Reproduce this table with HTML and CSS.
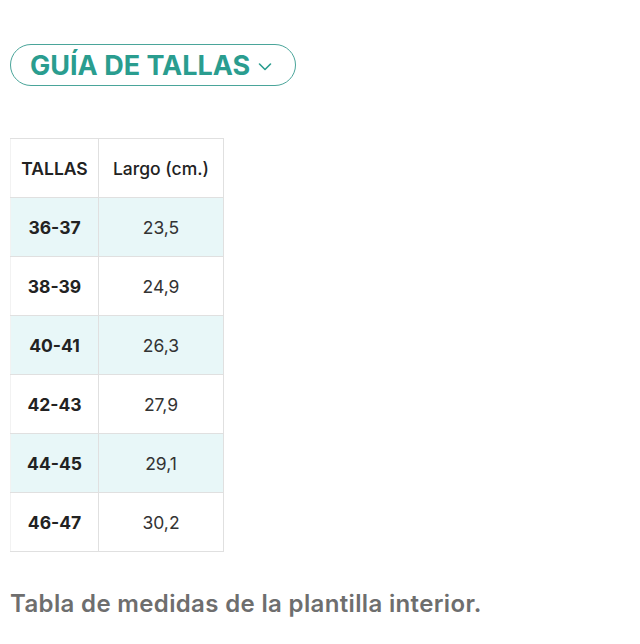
FILE: index.html
```html
<!DOCTYPE html>
<html lang="es">
<head>
<meta charset="utf-8">
<link rel="stylesheet" href="styles.css">
</head>
<body>
<div class="page">
  <button class="guide-btn">
    <span class="guide-label">GUÍA DE TALLAS</span>
    <svg class="chev" width="14" height="10" viewBox="0 0 14 10"><path d="M1.5 2 L7 7.5 L12.5 2" fill="none" stroke="#2a9d8f" stroke-width="1.6" stroke-linecap="round" stroke-linejoin="round"/></svg>
  </button>
  <table class="sizes">
    <thead>
      <tr><th class="c1">TALLAS</th><th class="c2">Largo (cm.)</th></tr>
    </thead>
    <tbody>
      <tr class="alt"><td class="size">36-37</td><td>23,5</td></tr>
      <tr><td class="size">38-39</td><td>24,9</td></tr>
      <tr class="alt"><td class="size">40-41</td><td>26,3</td></tr>
      <tr><td class="size">42-43</td><td>27,9</td></tr>
      <tr class="alt"><td class="size">44-45</td><td>29,1</td></tr>
      <tr><td class="size">46-47</td><td>30,2</td></tr>
    </tbody>
  </table>
  <p class="caption">Tabla de medidas de la plantilla interior.</p>
</div>
</body>
</html>
```
FILE: styles.css
```css
* { box-sizing: border-box; }
html, body { margin: 0; padding: 0; background: #fff; }
body { font-family: Inter, "Noto Sans", sans-serif; color: #222; }
.page { padding: 44px 10px 0 10px; }
.guide-btn {
  display: inline-flex;
  align-items: center;
  gap: 8px;
  height: 42px;
  padding: 0 23px 0 19px;
  border: 1.5px solid #4aa59a;
  border-radius: 21px;
  background: #fff;
  font-family: Inter, "Noto Sans", sans-serif;
  cursor: pointer;
}
.guide-label {
  font-size: 27px;
  font-weight: 700;
  color: #2a9d8f;
  letter-spacing: 0;
}
.chev { margin-top: 3px; }
.sizes {
  margin-top: 52px;
  border-collapse: collapse;
  font-size: 17.5px;
}
.sizes th, .sizes td {
  border: 1px solid #e0e0e0;
  height: 59px;
  text-align: center;
  padding: 0;
}
.sizes th:first-child, .sizes td:first-child { border-left-color: #f2f2f2; }
.sizes .c1 { width: 88px; font-weight: 600; }
.sizes .c2 { width: 125px; font-weight: 500; }
.sizes td { font-weight: 400; color: #333; }
.sizes td.size { font-weight: 700; color: #222; }
.sizes tr.alt td { background: #e8f7f8; }
.caption {
  margin: 37px 0 0 0;
  font-size: 24px;
  font-weight: 600;
  letter-spacing: 0.35px;
  color: #6e6e6e;
}
```
